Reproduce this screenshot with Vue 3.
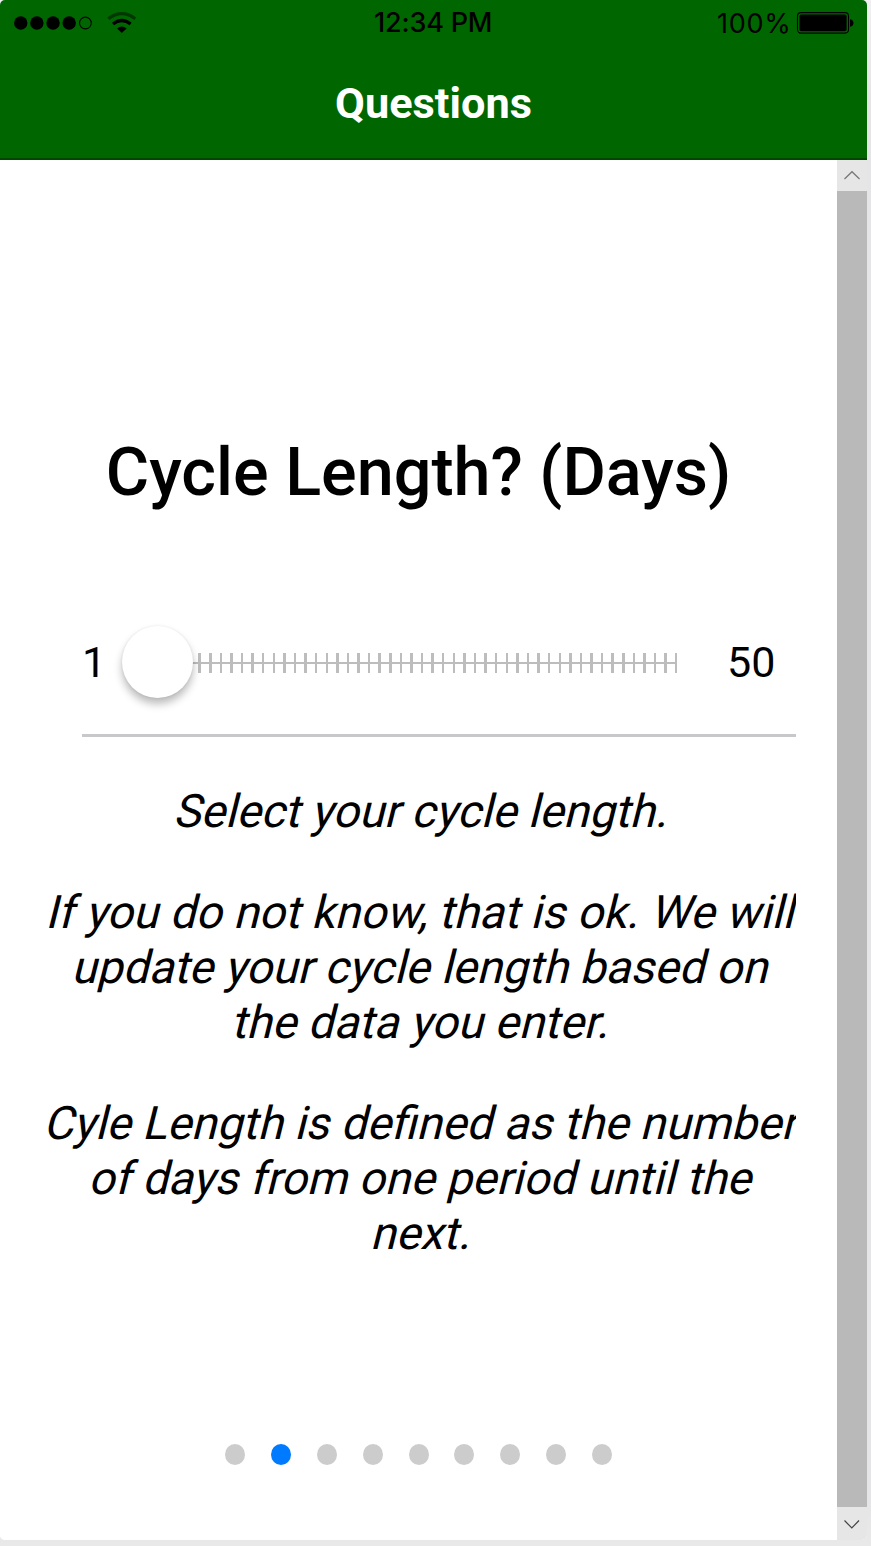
<script setup>
const ticks = Array.from({ length: 46 }, (_, i) => {
  const left = 156.1 + 10.59 * (i + 4)
  const x = Math.round(left)
  return { x: x - 121, w: Math.round(left + 2.46) - x }
})
const paragraphs = [
  ['Select your cycle length.'],
  ['If you do not know, that is ok. We will', 'update your cycle length based on', 'the data you enter.'],
  ['Cyle Length is defined as the number', 'of days from one period until the', 'next.']
]
</script>

<template>
  <div class="stage">
    <div class="phone">
      <header>
        <div class="status">
          <svg class="signal" width="140" height="46" viewBox="0 0 140 46">
            <circle v-for="n in 4" :key="n" :cx="4.6 + n * 16.15" cy="23" r="6.7" />
            <circle cx="85.4" cy="23" r="5.9" fill="none" stroke="#000" stroke-width="1.1" />
            <g fill="none" stroke="#000" stroke-width="3.2">
              <path d="M108.3 18.7Q121.8 8.5 135.3 18.7" opacity=".45" />
              <path d="M113 24Q121.8 17 130.6 24" />
            </g>
            <path d="M117 28.6Q121.8 24.6 126.6 28.6L121.8 33Z" />
          </svg>
          <span class="time">12:34 PM</span>
          <span class="charge">100%</span>
          <svg class="battery" width="58" height="24" viewBox="0 0 58 24">
            <rect x="1.5" y="1.6" width="51" height="20.5" rx="3.5" fill="none" stroke="#000" stroke-width="1.1" />
            <rect x="3.4" y="3.4" width="47.2" height="16.9" rx="1.8" />
            <path d="M54 8.2Q57.5 9 57.5 12T54 15.8Z" />
          </svg>
        </div>
        <h1>Questions</h1>
      </header>
      <div class="body">
        <main>
          <h2>Cycle Length? (Days)</h2>
          <div class="range">
            <span class="min">1</span>
            <div class="slider">
              <svg width="556" height="20" shape-rendering="crispEdges" fill="#bdbdbd">
                <rect x="36" y="9" width="520" height="2" />
                <rect v-for="t in ticks" :key="t.x" :x="t.x" y="0" :width="t.w" height="20" />
              </svg>
              <i class="knob"></i>
            </div>
            <span class="max">50</span>
          </div>
          <div class="copy">
            <p v-for="(p, i) in paragraphs" :key="i">
              <span v-for="l in p" :key="l" class="line"><span class="slant">{{ l }}</span></span>
            </p>
          </div>
          <nav><i v-for="n in 9" :key="n" :class="{ active: n === 2 }"></i></nav>
        </main>
        <aside>
          <svg width="30" height="31" fill="none" stroke="#777" stroke-width="1.2"><path d="M7.5 19L15 11.7L22.5 19" /></svg>
          <div class="thumb"></div>
          <svg width="30" height="33" fill="none" stroke="#444" stroke-width="1.2"><path d="M7.5 13.5L14.8 21L22 13.5" /></svg>
        </aside>
      </div>
    </div>
  </div>
</template>

<style>
body { background: #e5e5e7; }
</style>

<style scoped>
* { box-sizing: border-box; }
.stage { width: 871px; height: 1546px; overflow: hidden; background: linear-gradient(#f0f0f1, #e5e5e7 100px, #e5e5e7 1500px, #e9e9ea); font-family: Roboto, "Liberation Sans", sans-serif; color: #000; }
.phone { width: 867px; height: 1540px; border-radius: 5px; overflow: hidden; background: #fff; }
header { height: 160px; background: #060; border-bottom: 2px solid #004500; }
.status { height: 46px; display: flex; align-items: center; font-family: Inter, sans-serif; font-size: 27px; line-height: 44px; }
.status svg { flex: none; }
.time { width: 118px; margin-left: 234px; font-weight: 500; font-size: 27px; letter-spacing: -.2px; white-space: nowrap; text-align: center; }
.charge { margin-left: 225px; width: 73px; padding-top: 2px; letter-spacing: .7px; }
.battery { margin-left: 6px; }
h1 { margin: 0; text-align: center; color: #fff; font-size: 43.3px; font-weight: 700; line-height: 50px; padding-top: 33px; }
.body { display: flex; height: 1380px; }
main { width: 837px; padding-top: 272px; background: #fff; }
h2 { margin: 0; height: 80px; font-size: 66.5px; line-height: 80px; font-weight: 500; text-align: center; white-space: nowrap; }
.range { margin: 73px 41px 0 82px; height: 152px; padding-top: 5px; border-bottom: 3px solid #c8c7cc; display: flex; align-items: center; font-size: 43px; line-height: 50px; }
.min { width: 39px; }
.slider { position: relative; width: 556px; height: 20px; margin-top: 2px; }
.slider svg { display: block; }
.knob { position: absolute; left: 1px; top: -27px; width: 71px; height: 72px; border-radius: 50%; background: #fff; box-shadow: 0 0 2px 1px rgba(0,0,0,.04), 0 6px 9px rgba(0,0,0,.27); }
.max { margin-left: 50px; }
.copy { margin: 47px 41px 0 41px; overflow: hidden; font-size: 46px; line-height: 55px; }
p { margin: 0 0 46px; }
.line { display: flex; justify-content: center; height: 55px; white-space: nowrap; }
.slant { transform: skewX(-14deg); transform-origin: 50% 47px; }
nav { display: flex; justify-content: center; gap: 25.8px; margin-top: 137px; }
nav i { width: 20px; height: 21px; border-radius: 50%; background: #ccc; }
nav .active { background: #007aff; }
aside { width: 30px; background: #e6e6e6; }
aside svg { display: block; }
.thumb { height: 1316px; background: #b9b9b9; }
</style>
